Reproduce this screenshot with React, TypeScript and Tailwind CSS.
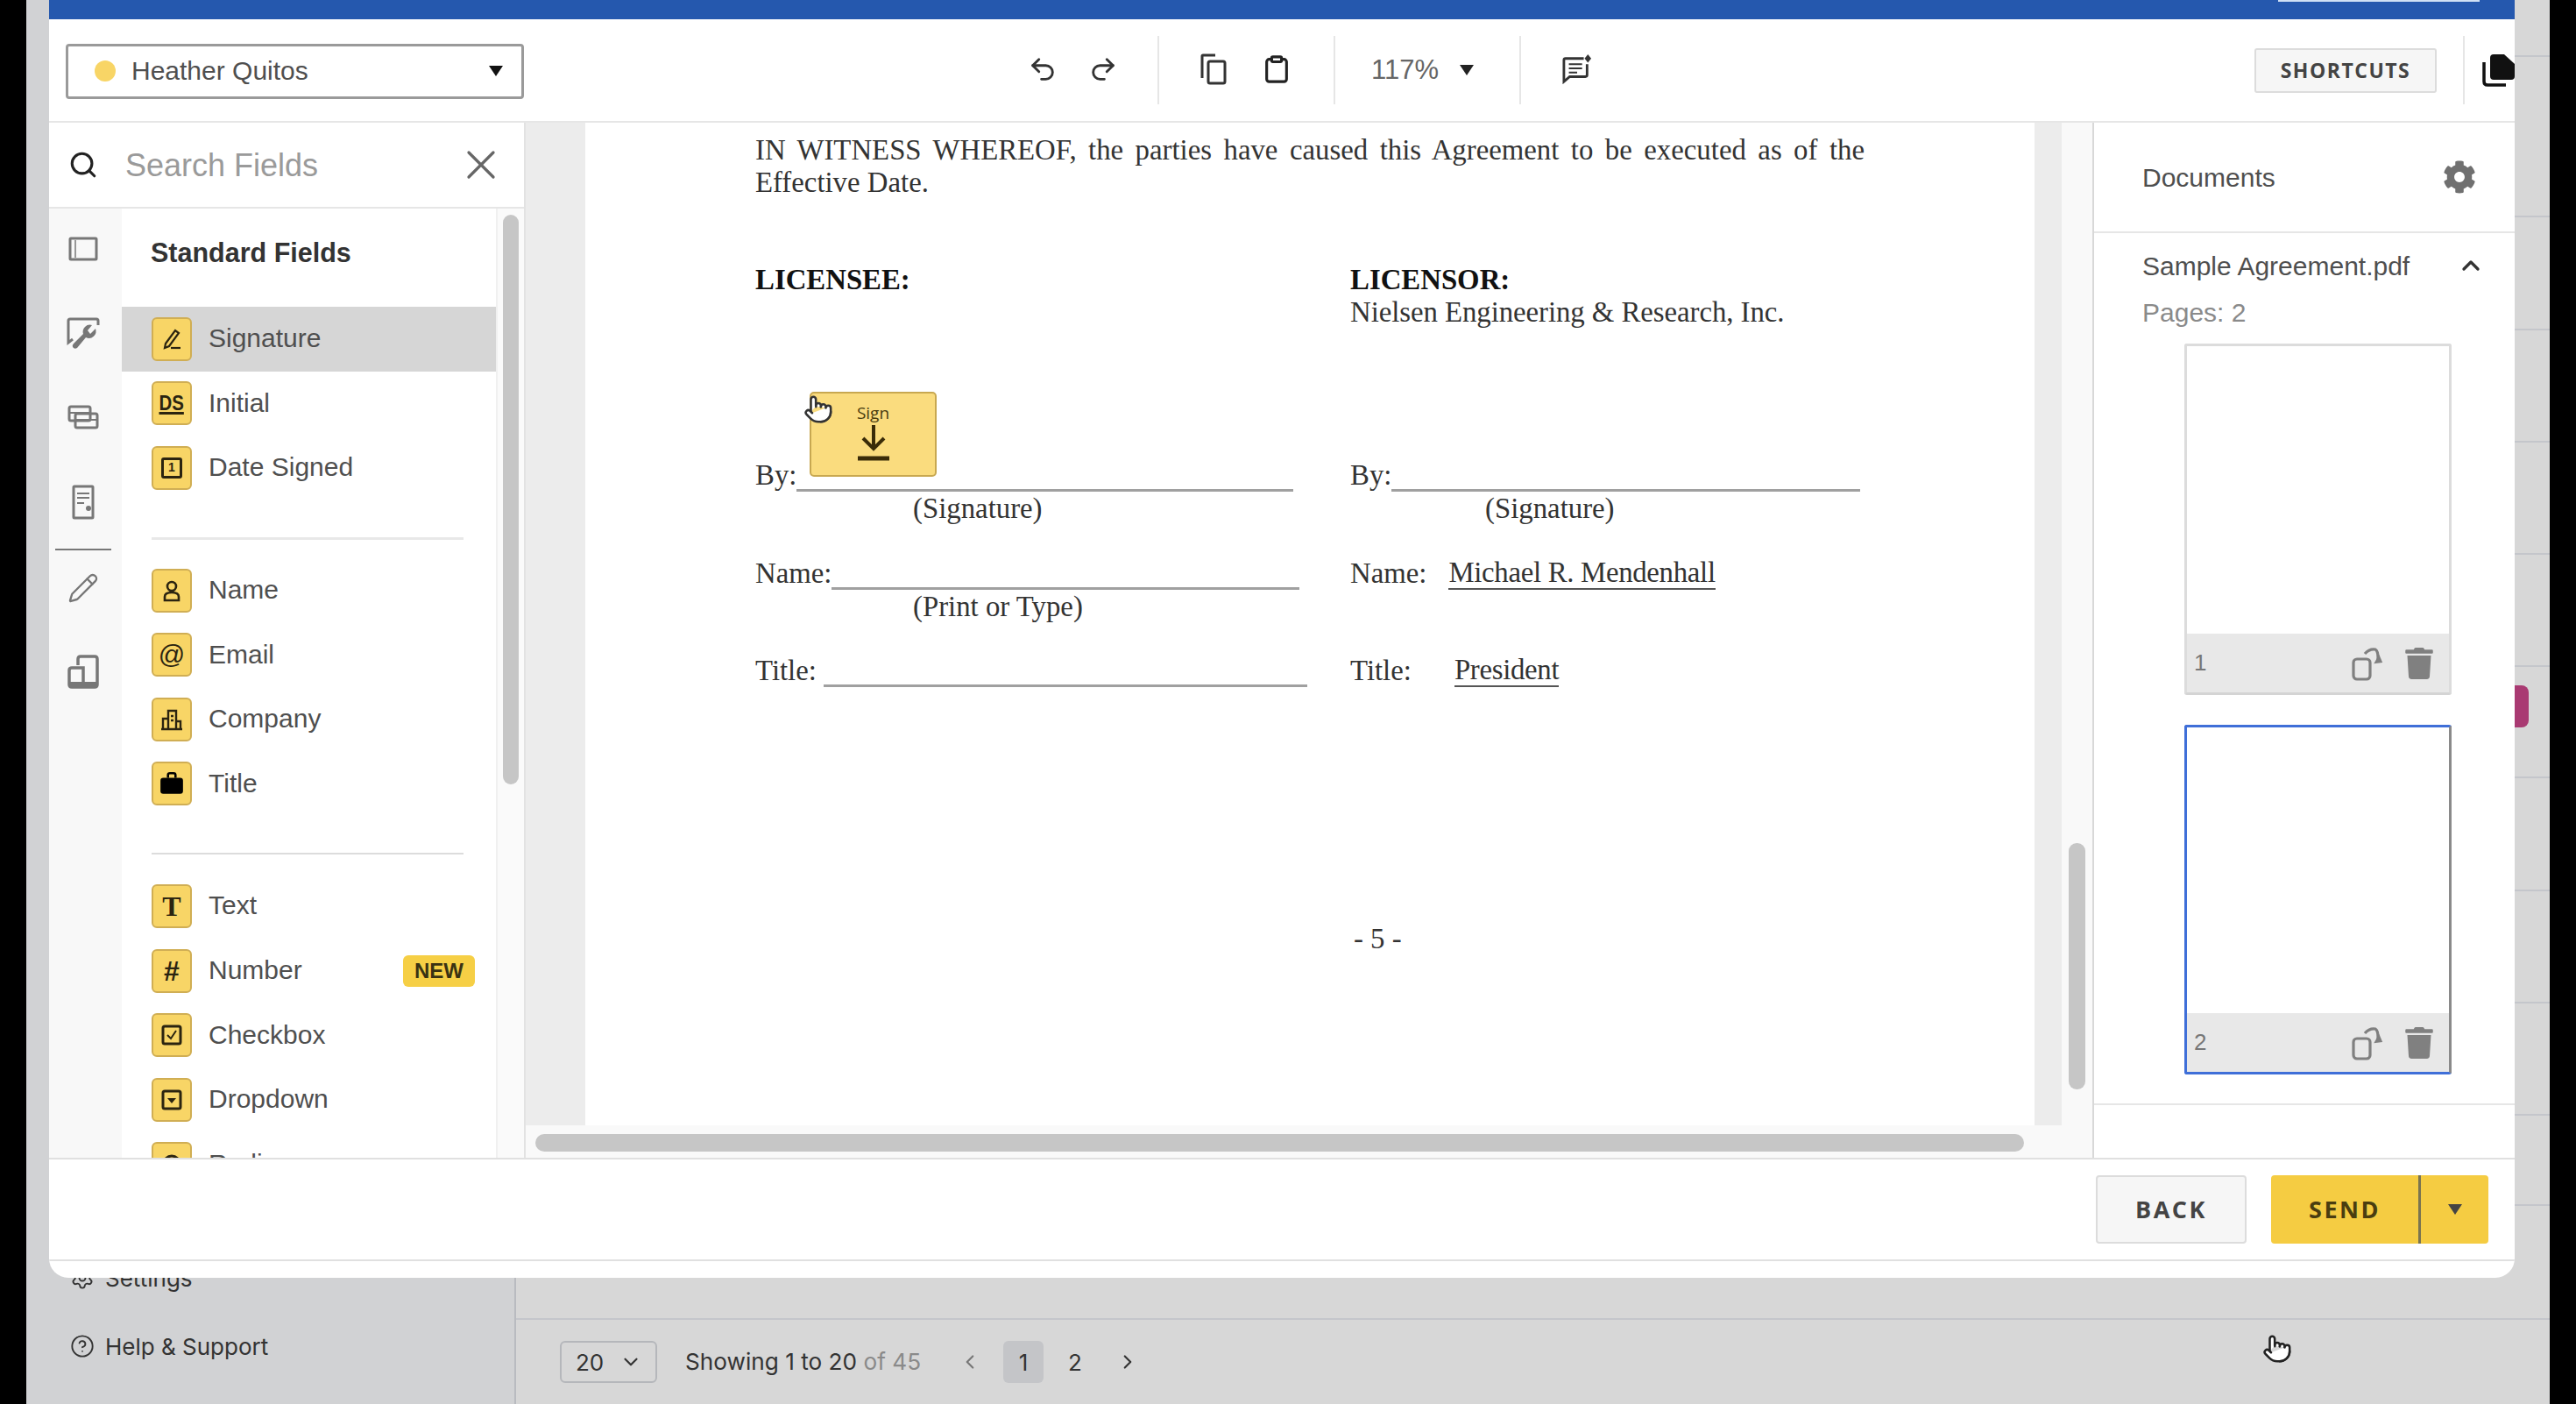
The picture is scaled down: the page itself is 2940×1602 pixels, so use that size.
import type { ReactNode } from 'react';
import { Undo2, Redo2, Clipboard, Search, X, ChevronUp, ChevronDown, ChevronLeft, ChevronRight, Pencil, Settings, CircleHelp, Pointer } from 'lucide-react';
import { FaCog, FaTrash } from 'react-icons/fa';

const Caret = ({ className }: { className: string }) => (
  <svg viewBox="0 0 18 14" className={className}>
    <polygon points="1,1 17,1 9,13" fill="currentColor" />
  </svg>
);

const Sep = ({ className }: { className: string }) => <div className={`w-[2px] h-[78px] bg-[#e6e6e6] shrink-0 ${className}`} />;

const RotateIcon = () => (
  <svg viewBox="0 0 40 40" className="w-[40px] h-[40px] text-[#808080]" fill="none" stroke="currentColor" strokeWidth="3.2">
    <rect x="2" y="15" width="19" height="23" rx="4" />
    <path d="M15 9 q5 -6 12 -5 q3 2 3 9 v4" />
    <polygon points="24,14 36,14 30,22" fill="currentColor" stroke="none" transform="rotate(-60 30 16)" />
  </svg>
);

const Thumb = ({ n, selected, height, footer }: { n: string; selected?: boolean; height: string; footer: string }) => (
  <div className={`ml-[103px] w-[305px] flex flex-col rounded-[3px] border-t-[3px] border-x-[3px] shrink-0 ${height} ${selected ? 'border-[#3f6fd8] border-r-[#8a8a8a] border-b-[3px] border-b-[#3f6fd8]' : 'border-[#dcdcdc] border-b-[3px] border-b-[#d4d4d4]'}`}>
    <div className="flex-1 bg-white" />
    <div className={`flex items-center bg-[#e8e8e8] pl-[8px] pr-[16px] ${footer}`}>
      <span className="text-[26px] text-[#777] flex-1">{n}</span>
      <RotateIcon />
      <FaTrash className="ml-[19px] text-[#808080]" size={36} />
    </div>
  </div>
);

// yellow tile in front of each field type
const Tile = ({ children }: { children: ReactNode }) => (
  <div className="w-[46px] h-[50px] rounded-[6px] bg-[#f8d566] border-2 border-[#d0ae54] flex items-center justify-center shrink-0 text-[#2b2410]">
    {children}
  </div>
);

const glyph = 'w-[28px] h-[28px]';

const Field = ({ icon, label, active, badge }: { icon: ReactNode; label: string; active?: boolean; badge?: boolean }) => (
  <div className={`h-[73.6px] flex items-center pl-[34px] shrink-0 ${active ? 'bg-[#d6d6d6]' : ''}`}>
    <Tile>{icon}</Tile>
    <span className="ml-[19px] -mt-[2px] text-[30px] text-[#4f4f4f]">{label}</span>
    {badge && <span className="ml-auto mr-[24px] w-[82px] h-[36px] rounded-[6px] bg-[#f6cf45] flex items-center justify-center text-[24px] font-bold text-[#3a3213]">NEW</span>}
  </div>
);

const SigLine = ({ label, width, gap, value }: { label: string; width: string; gap: string; value?: string }) => (
  <div className="flex items-end h-[37px]">
    <span>{label}</span>
    {value ? <span className={`${gap} border-b-2 border-[#555] leading-[35px] tracking-[-0.3px]`}>{value}</span> : <span className={`${gap} ${width} border-b-[3px] border-[#a0a0a0]`} />}
  </div>
);

const railIcon = 'w-[40px] h-[40px] text-[#777]';

export default function App() {
  const rowLines = ['h-[65px]', 'h-[183px]', 'h-[129px]', 'h-[128px]', 'h-[128px]', 'h-[128px]', 'h-[127px]', 'h-[129px]', 'h-[128px]', 'h-[128px]', 'h-[103px]'];

  return (
    <div className="relative w-[2940px] h-[1602px] bg-black overflow-hidden font-['Liberation_Sans',sans-serif]">
      {/* page behind the modal */}
      <div className="ml-[30px] w-[2880px] h-full flex font-['Inter',sans-serif]">
        <aside className="w-[559px] h-full bg-[#d1d2d4] border-r-2 border-[#b9bbc0] flex flex-col justify-end pb-[27px] text-[26px] text-[#333]">
          <div className="h-[78px] flex items-center pl-[50px] gap-[12px]"><Settings size={28} strokeWidth={1.6} /><span>Settings</span></div>
          <div className="h-[78px] flex items-center pl-[50px] gap-[12px]"><CircleHelp size={28} strokeWidth={1.6} /><span>Help &amp; Support</span></div>
        </aside>
        <main className="flex-1 bg-[#d7d7d7] flex flex-col">
          <div className="flex-1 flex flex-col">
            {rowLines.map((h, i) => (
              <div key={i} className={`${h} border-b-2 border-[#c4c6cb] flex justify-end pr-[24px]`}>
                {i === 6 && <div className="mt-[21px] w-[40px] h-[48px] rounded-[8px] bg-[#a93a72]" />}
              </div>
            ))}
          </div>
          <div className="h-[98px] border-t-2 border-[#c4c6cb] flex items-center pl-[50px] text-[26px] text-[#333] shrink-0">
            <div className="w-[111px] h-[48px] rounded-[6px] border-2 border-[#b5b7bb] flex items-center pl-[16px] gap-[18px]">
              <span>20</span><ChevronDown size={26} />
            </div>
            <span className="ml-[32px] text-[26.2px]">Showing 1 to 20 <span className="text-[#8a8a8a]">of 45</span></span>
            <ChevronLeft className="ml-[43px] text-[#777]" size={26} />
            <div className="ml-[25px] w-[46px] h-[48px] rounded-[6px] bg-[#c4c5c8] flex items-center justify-center">1</div>
            <span className="ml-[28px]">2</span>
            <ChevronRight className="ml-[39px]" size={26} />
          </div>
        </main>
      </div>

      {/* modal */}
      <div className="absolute left-[56px] top-0 w-[2814px] h-[1458px] bg-white rounded-b-[22px] overflow-hidden flex flex-col">
        <div className="h-[22px] bg-[#2558ae] shrink-0 flex justify-end pr-[40px]">
          <div className="w-[230px] h-[2px] bg-[#cfe0f5]" />
        </div>
        <div className="h-[118px] shrink-0 border-b-2 border-[#e6e6e6] flex items-center">
          <div className="ml-[19px] mt-[2px] w-[523px] h-[63px] shrink-0 rounded-[4px] border-[3px] border-[#9a9a9a] flex items-center pl-[30px] pr-[20px]">
            <span className="w-[24px] h-[24px] rounded-full bg-[#f8d566]" />
            <span className="ml-[18px] -mt-[2px] text-[30px] text-[#4f4f4f] flex-1">Heather Quitos</span>
            <Caret className="w-[18px] h-[14px] text-[#111]" />
          </div>
          <Undo2 className="ml-[575px] -mt-[2px] shrink-0 text-[#333]" size={34} strokeWidth={2} />
          <Redo2 className="ml-[35px] -mt-[2px] shrink-0 text-[#333]" size={34} strokeWidth={2} />
          <Sep className="ml-[45px]" />
          <svg viewBox="0 0 32 36" className="ml-[47px] -mt-[2px] w-[32px] h-[36px] shrink-0 text-[#333]" fill="none" stroke="currentColor" strokeWidth="3">
            <path d="M2 28 V3 q0 -1 1 -1 H17" />
            <rect x="9" y="9" width="19" height="25" rx="2" />
          </svg>
          <Clipboard className="ml-[38px] -mt-[2px] shrink-0 text-[#222]" size={34} strokeWidth={2.2} />
          <Sep className="ml-[48px]" />
          <span className="ml-[41px] text-[31px] text-[#666]">117%</span>
          <Caret className="ml-[23px] shrink-0 w-[18px] h-[14px] text-[#222]" />
          <Sep className="ml-[51px]" />
          <svg viewBox="0 0 36 36" className="ml-[47px] -mt-[2px] w-[34px] h-[34px] shrink-0 text-[#333]" fill="none" stroke="currentColor" strokeWidth="3">
            <path d="M26 5 H4 q-2 0 -2 2 V33 L9 27 H28 q2 0 2 -2 V12" />
            <path d="M8 12 H24 M8 17 H24 M8 22 H18" strokeWidth="2.2" />
            <polygon points="31,0 35,5 31,10 27,5" fill="currentColor" stroke="none" />
          </svg>
          <div className="ml-auto w-[208px] h-[51px] shrink-0 rounded-[3px] bg-[#f6f6f6] border-2 border-[#dcdcdc] flex items-center justify-center font-['Open_Sans',sans-serif] font-bold text-[23px] tracking-[1.5px] text-[#444]">SHORTCUTS</div>
          <Sep className="ml-[30px]" />
          <svg viewBox="0 0 38 38" className="ml-[19px] w-[38px] h-[38px] shrink-0 text-[#111]">
            <path d="M14 1 H26 L38 12 V26 Q38 30 34 30 H14 Q10 30 10 26 V5 Q10 1 14 1 Z" fill="currentColor" />
            <path d="M3 10 V32 Q3 36 7 36 H28" fill="none" stroke="currentColor" strokeWidth="3.5" />
          </svg>
        </div>

        <div className="h-[1183px] shrink-0 flex border-b-2 border-[#e0e0e0]">
          {/* fields panel */}
          <div className="w-[544px] shrink-0 border-r-2 border-[#e2e2e2] flex flex-col">
            <div className="h-[98px] shrink-0 border-b-2 border-[#e6e6e6] flex items-center pl-[22px] pr-[21px]">
              <Search className="text-[#222]" size={34} strokeWidth={2.2} />
              <span className="ml-[31px] mt-[2px] text-[36px] text-[#9a9a9a] flex-1">Search Fields</span>
              <X className="text-[#666]" size={56} strokeWidth={1.4} />
            </div>
            <div className="flex-1 flex min-h-0">
              <div className="w-[83px] shrink-0 bg-[#f8f8f8] flex flex-col items-center pr-[6px]">
                <svg viewBox="0 0 40 40" className={`${railIcon} mt-[26px]`} fill="none" stroke="currentColor" strokeWidth="3">
                  <rect x="5" y="8" width="30" height="24" rx="1" />
                  <path d="M11 10 V30" strokeWidth="1.5" />
                </svg>
                <svg viewBox="0 0 40 40" className={`${railIcon} mt-[57px]`} fill="none" stroke="currentColor" strokeWidth="3">
                  <path d="M8 26 L3 30 V5 q0 -2 2 -2 H35 q2 0 2 2 V10" />
                  <path d="M34 14 a8 8 0 0 1 -11 10 L13 36 q-3 2 -5 -1 q-1 -2 1 -4 L20 20 a8 8 0 0 1 10 -10 l-5 6 l3 4 z" fill="currentColor" stroke="none" />
                </svg>
                <svg viewBox="0 0 40 40" className={`${railIcon} mt-[55px]`} fill="none" stroke="currentColor" strokeWidth="3">
                  <rect x="4" y="8" width="24" height="16" rx="2" />
                  <rect x="11" y="16" width="25" height="16" rx="2" />
                  <path d="M4 15 H28 M11 23 H36" strokeWidth="2" />
                </svg>
                <svg viewBox="0 0 40 40" className={`${railIcon} mt-[57px]`} fill="none" stroke="currentColor" strokeWidth="3">
                  <rect x="9" y="2" width="22" height="36" rx="1" />
                  <path d="M13 10 H27 M13 15 H27 M13 21 H21" strokeWidth="2" />
                  <circle cx="26" cy="27" r="3" fill="currentColor" stroke="none" />
                </svg>
                <div className="mt-[33px] w-[64px] h-[2px] bg-[#777]" />
                <Pencil className="w-[36px] h-[36px] text-[#777] mt-[25px]" strokeWidth={1.6} />
                <svg viewBox="0 0 40 40" className={`${railIcon} mt-[58px]`} fill="none" stroke="currentColor" strokeWidth="3.5">
                  <path d="M14 12 V5 q0 -3 3 -3 H33 q3 0 3 3 V34 q0 3 -3 3 H7 q-3 0 -3 -3 V18 q0 -3 3 -3 H20 V37" />
                  <path d="M4 31 H36 V37 H4 Z" fill="currentColor" stroke="none" />
                </svg>
              </div>

              <div className="w-[427px] shrink-0 flex flex-col overflow-hidden bg-white">
                <div className="h-[112px] shrink-0 flex items-start pt-[17px]">
                  <div className="-ml-[3px] w-[3px] h-[65px] bg-[#777]" />
                  <span className="ml-[33px] h-[68px] flex items-center text-[30.5px] font-bold text-[#333]">Standard Fields</span>
                </div>
                <Field active label="Signature" icon={
                  <svg viewBox="0 0 28 28" className={glyph} fill="none" stroke="currentColor" strokeWidth="2.2">
                    <path d="M7 19 L18 4 L22 7 L11 22 L6 24 Z" />
                    <path d="M13 24 H24" />
                  </svg>
                } />
                <Field label="Initial" icon={
                  <span className="text-[24px] leading-[24px] font-bold underline decoration-[3px] underline-offset-[2px] scale-x-[0.85]">DS</span>
                } />
                <Field label="Date Signed" icon={
                  <span className="w-[24px] h-[24px] border-[3px] border-[#2b2410] rounded-[3px] flex items-center justify-center text-[14px] font-bold">1</span>
                } />
                <div className="mt-[42px] ml-[34px] w-[356px] h-[3px] bg-[#e8e8e8] shrink-0" />
                <div className="h-[21px] shrink-0" />
                <Field label="Name" icon={
                  <svg viewBox="0 0 28 28" className={glyph} fill="none" stroke="currentColor" strokeWidth="2.6">
                    <circle cx="14" cy="9" r="5" />
                    <path d="M6 25 V21 q0 -5 8 -5 q8 0 8 5 V25 Z" />
                  </svg>
                } />
                <Field label="Email" icon={<span className="text-[30px] leading-none">@</span>} />
                <Field label="Company" icon={
                  <svg viewBox="0 0 28 28" className={glyph} fill="none" stroke="currentColor" strokeWidth="2.4">
                    <path d="M10 25 V4 H19 V25" />
                    <path d="M4 25 V13 H10 M19 16 H24 V25" />
                    <path d="M2 25 H26 M13 10 H16 M13 15 H16" />
                  </svg>
                } />
                <Field label="Title" icon={
                  <svg viewBox="0 0 28 28" className="w-[30px] h-[30px] text-black">
                    <path d="M10 8 V5 q0 -2 2 -2 h4 q2 0 2 2 V8" fill="none" stroke="currentColor" strokeWidth="2.4" />
                    <rect x="2" y="8" width="24" height="17" rx="3" fill="currentColor" />
                  </svg>
                } />
                <div className="mt-[42px] ml-[34px] w-[356px] h-[2px] bg-[#dcdcdc] shrink-0" />
                <div className="h-[22px] shrink-0" />
                <Field label="Text" icon={<span className="text-[32px] leading-none font-bold font-['Liberation_Serif',serif]">T</span>} />
                <Field label="Number" badge icon={<span className="text-[32px] leading-none font-bold">#</span>} />
                <Field label="Checkbox" icon={
                  <svg viewBox="0 0 28 28" className={glyph} fill="none" stroke="currentColor" strokeWidth="3">
                    <rect x="4" y="4" width="20" height="20" rx="2" />
                    <path d="M9 14 L13 18 L19 9" strokeWidth="2" />
                  </svg>
                } />
                <Field label="Dropdown" icon={
                  <svg viewBox="0 0 28 28" className={glyph} fill="none" stroke="currentColor" strokeWidth="3">
                    <rect x="4" y="4" width="20" height="20" rx="2" />
                    <polygon points="9,12 19,12 14,18" fill="currentColor" stroke="none" />
                  </svg>
                } />
                <Field label="Radio" icon={
                  <svg viewBox="0 0 28 28" className={glyph} fill="none" stroke="currentColor" strokeWidth="3">
                    <circle cx="14" cy="14" r="9" />
                  </svg>
                } />
              </div>

              <div className="flex-1 bg-[#fafafa] border-l-2 border-[#f0f0f0] pl-[6px]">
                <div className="mt-[7px] w-[18px] h-[650px] rounded-[9px] bg-[#c6c6c6]" />
              </div>
            </div>
          </div>

          {/* document */}
          <div className="w-[1788px] shrink-0 flex flex-col">
            <div className="flex-1 flex min-h-0">
              <div className="w-[68px] shrink-0 bg-[#ececec]" />
              <div className="w-[1654px] shrink-0 bg-white pl-[194px] pt-[13px] font-['Liberation_Serif',serif] text-[32.8px] leading-[37px] text-[#333]">
                <div className="w-[1266px] text-justify [text-align-last:justify] [word-spacing:2px]">IN WITNESS WHEREOF, the parties have caused this Agreement to be executed as of the</div>
                <div>Effective Date.</div>
                <div className="mt-[74px] flex">
                  <div className="w-[679px] shrink-0">
                    <div className="font-bold text-[#111]">LICENSEE:</div>
                    <div className="h-[37px]" />
                    <div className="mt-[149px]"><SigLine label="By:" gap="ml-0" width="w-[567px]" /></div>
                    <div className="mt-[1px] pl-[180px]">(Signature)</div>
                    <div className="mt-[37px]"><SigLine label="Name:" gap="ml-0" width="w-[534px]" /></div>
                    <div className="mt-[1px] pl-[180px]">(Print or Type)</div>
                    <div className="mt-[36px]"><SigLine label="Title:" gap="ml-[8px]" width="w-[552px]" /></div>
                    <div className="h-[271px]" />
                  </div>
                  <div>
                    <div className="font-bold text-[#111]">LICENSOR:</div>
                    <div className="tracking-[-0.05px]">Nielsen Engineering &amp; Research, Inc.</div>
                    <div className="mt-[149px]"><SigLine label="By:" gap="ml-0" width="w-[535px]" /></div>
                    <div className="mt-[1px] pl-[154px]">(Signature)</div>
                    <div className="mt-[37px]"><SigLine label="Name:" gap="ml-[25px]" width="" value="Michael R. Mendenhall" /></div>
                    <div className="h-[38px]" />
                    <div className="mt-[36px]"><SigLine label="Title:" gap="ml-[49px]" width="" value="President" /></div>
                  </div>
                </div>
                <div className="-mt-[2px] ml-[683px]">- 5 -</div>
              </div>
              <div className="w-[31px] shrink-0 bg-[#ececec]" />
              <div className="flex-1 bg-[#f9f9f9] pl-[8px]">
                <div className="mt-[822px] w-[19px] h-[281px] rounded-[9px] bg-[#c6c6c6]" />
              </div>
            </div>
            <div className="h-[37px] shrink-0 bg-[#f9f9f9] pl-[11px] pt-[10px]">
              <div className="w-[1699px] h-[20px] rounded-[10px] bg-[#c6c6c6]" />
            </div>
          </div>

          {/* documents panel */}
          <div className="flex-1 border-l-2 border-[#d8d8d8] flex flex-col">
            <div className="h-[1121px] shrink-0 border-b-2 border-[#e6e6e6] flex flex-col">
              <div className="h-[126px] shrink-0 border-b-2 border-[#e6e6e6] flex items-center pl-[55px] pr-[44px] text-[30px] text-[#4f4f4f]">
                <span className="flex-1">Documents</span>
                <FaCog className="text-[#707070]" size={38} />
              </div>
              <div className="mt-[15px] h-[44px] shrink-0 flex items-center pl-[55px] pr-[34px] text-[30px] text-[#4f4f4f]">
                <span className="flex-1">Sample Agreement.pdf</span>
                <ChevronUp className="text-[#333]" size={32} strokeWidth={2.5} />
              </div>
              <div className="mt-[13px] h-[36px] shrink-0 flex items-center pl-[55px] text-[30px] text-[#8a8a8a]">Pages: 2</div>
              <div className="h-[18px] shrink-0" />
              <Thumb n="1" height="h-[401px]" footer="h-[67px]" />
              <div className="h-[34px] shrink-0" />
              <Thumb n="2" selected height="h-[399px]" footer="h-[67px]" />
            </div>
          </div>
        </div>

        {/* footer */}
        <div className="h-[116px] shrink-0 border-b-2 border-[#e0e0e0] flex items-center justify-end pr-[30px] font-['Open_Sans',sans-serif] font-bold text-[27px] tracking-[2.5px]">
          <div className="w-[172px] h-[78px] rounded-[4px] bg-[#f6f6f6] border-2 border-[#dcdcdc] flex items-center justify-center text-[#444]">BACK</div>
          <div className="ml-[28px] w-[248px] h-[78px] rounded-[4px] bg-[#f5cc42] flex items-center text-[#4a3d10]">
            <div className="w-[171px] h-full border-r-[3px] border-[#7a7450] flex items-center justify-center">SEND</div>
            <div className="flex-1 flex items-center justify-center"><Caret className="w-[18px] h-[14px] text-[#444]" /></div>
          </div>
        </div>
      </div>

      {/* sign tag dragged on the page */}
      <div className="absolute left-[924px] top-[447px] w-[145px] h-[97px] rounded-[5px] bg-[#fadc7e] border-2 border-[#c8a850] flex flex-col items-center pt-[10px] text-[#4a3d10]">
        <span className="text-[19px] leading-[24px] font-['Open_Sans',sans-serif]">Sign</span>
        <svg viewBox="0 0 40 44" className="w-[40px] h-[44px] text-[#3a2c08]" fill="none" stroke="currentColor" strokeWidth="4">
          <path d="M20 2 V28 M8 17 L20 29 L32 17" />
          <path d="M2 40 H38" strokeWidth="5" />
        </svg>
      </div>
      <Pointer className="absolute left-[917px] top-[450px] text-[#333] fill-white" size={34} strokeWidth={1.8} />
      <Pointer className="absolute left-[2582px] top-[1522px] text-[#222] fill-white" size={34} strokeWidth={1.8} />
    </div>
  );
}
